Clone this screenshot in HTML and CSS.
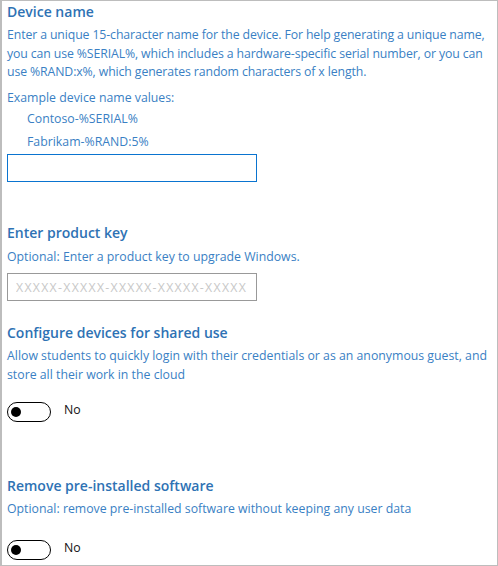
FILE: index.html
```html
<!DOCTYPE html>
<html>
<head>
<meta charset="utf-8">
<link rel="stylesheet" href="styles.css">
</head>
<body>
<div class="panel">
  <section class="section s-name">
    <h2 class="heading">Device name</h2>
    <p class="desc">Enter a unique 15-character name for the device. For help generating a unique name, you can use %SERIAL%, which includes a hardware-specific serial number, or you can use %RAND:x%, which generates random characters of x length.</p>
    <p class="examples-title">Example device name values:</p>
    <p class="example">Contoso-%SERIAL%</p>
    <p class="example ex2">Fabrikam-%RAND:5%</p>
    <input class="field field-active" type="text">
  </section>
  <section class="section s-key">
    <h2 class="heading">Enter product key</h2>
    <p class="desc">Optional: Enter a product key to upgrade Windows.</p>
    <input class="field" type="text" placeholder="XXXXX-XXXXX-XXXXX-XXXXX-XXXXX">
  </section>
  <section class="section s-shared">
    <h2 class="heading">Configure devices for shared use</h2>
    <p class="desc">Allow students to quickly login with their credentials or as an anonymous guest, and store all their work in the cloud</p>
    <div class="toggle-row">
      <span class="toggle"><span class="knob"></span></span>
      <span class="toggle-label">No</span>
    </div>
  </section>
  <section class="section s-remove">
    <h2 class="heading">Remove pre-installed software</h2>
    <p class="desc">Optional: remove pre-installed software without keeping any user data</p>
    <div class="toggle-row">
      <span class="toggle"><span class="knob"></span></span>
      <span class="toggle-label">No</span>
    </div>
  </section>
</div>
</body>
</html>
```
FILE: styles.css
```css
html, body {
  margin: 0;
  padding: 0;
  background: #fff;
}
.panel {
  box-sizing: border-box;
  width: 498px;
  height: 566px;
  border: 1px solid #bdbdbd;
  border-left: 2px solid #bdbdbd;
  padding: 0 0 0 5px;
  font-family: "Open Sans", "Noto Sans", sans-serif;
  font-size: 12.3px;
  color: #3a7fc4;
  overflow: hidden;
}
.section {
  display: flex;
  flex-direction: column;
  align-items: flex-start;
}
.heading {
  margin: 0;
  font-size: 14px;
  font-weight: 600;
  color: #2e72b4;
  line-height: 20px;
}
.s-name .heading { margin-top: 1px; }
.desc {
  margin: 4px 0 0;
  line-height: 18.5px;
}
.s-name .desc { letter-spacing: -0.12px; }
.examples-title {
  margin: 7px 0 0;
  line-height: 18px;
}
.example {
  margin: 3px 0 0 20px;
  line-height: 18px;
}
.ex2 { margin-top: 5px; }
.field {
  box-sizing: border-box;
  width: 250px;
  height: 28px;
  margin: 3px 0 0;
  padding: 0 8px;
  border: 1px solid #999;
  border-radius: 0;
  font-family: "Open Sans", "Noto Sans", sans-serif;
  font-size: 12.3px;
  outline: none;
}
.field::placeholder {
  color: #c8c8c8;
  letter-spacing: 1.3px;
}
.field-active {
  border: 1px solid #0a74d0;
}
.s-key { margin-top: 41px; }
.s-key .desc { margin-top: 5px; }
.s-key .field { margin-top: 7px; }
.s-shared { margin-top: 22px; }
.s-shared .desc { margin-top: 4px; }
.s-remove { margin-top: 54px; }
.s-remove .desc { margin-top: 4px; }
.toggle-row {
  display: flex;
  align-items: flex-start;
  margin-top: 18px;
}
.s-remove .toggle-row { margin-top: 21px; }
.toggle {
  box-sizing: border-box;
  width: 44px;
  height: 20px;
  border: 1.5px solid #000;
  border-radius: 10px;
  display: flex;
  align-items: center;
  padding-left: 3px;
}
.knob {
  width: 10px;
  height: 10px;
  border-radius: 50%;
  background: #000;
}
.toggle-label {
  margin-left: 13px;
  margin-top: -1px;
  color: #111;
  font-size: 12.3px;
  line-height: 18px;
}
```
